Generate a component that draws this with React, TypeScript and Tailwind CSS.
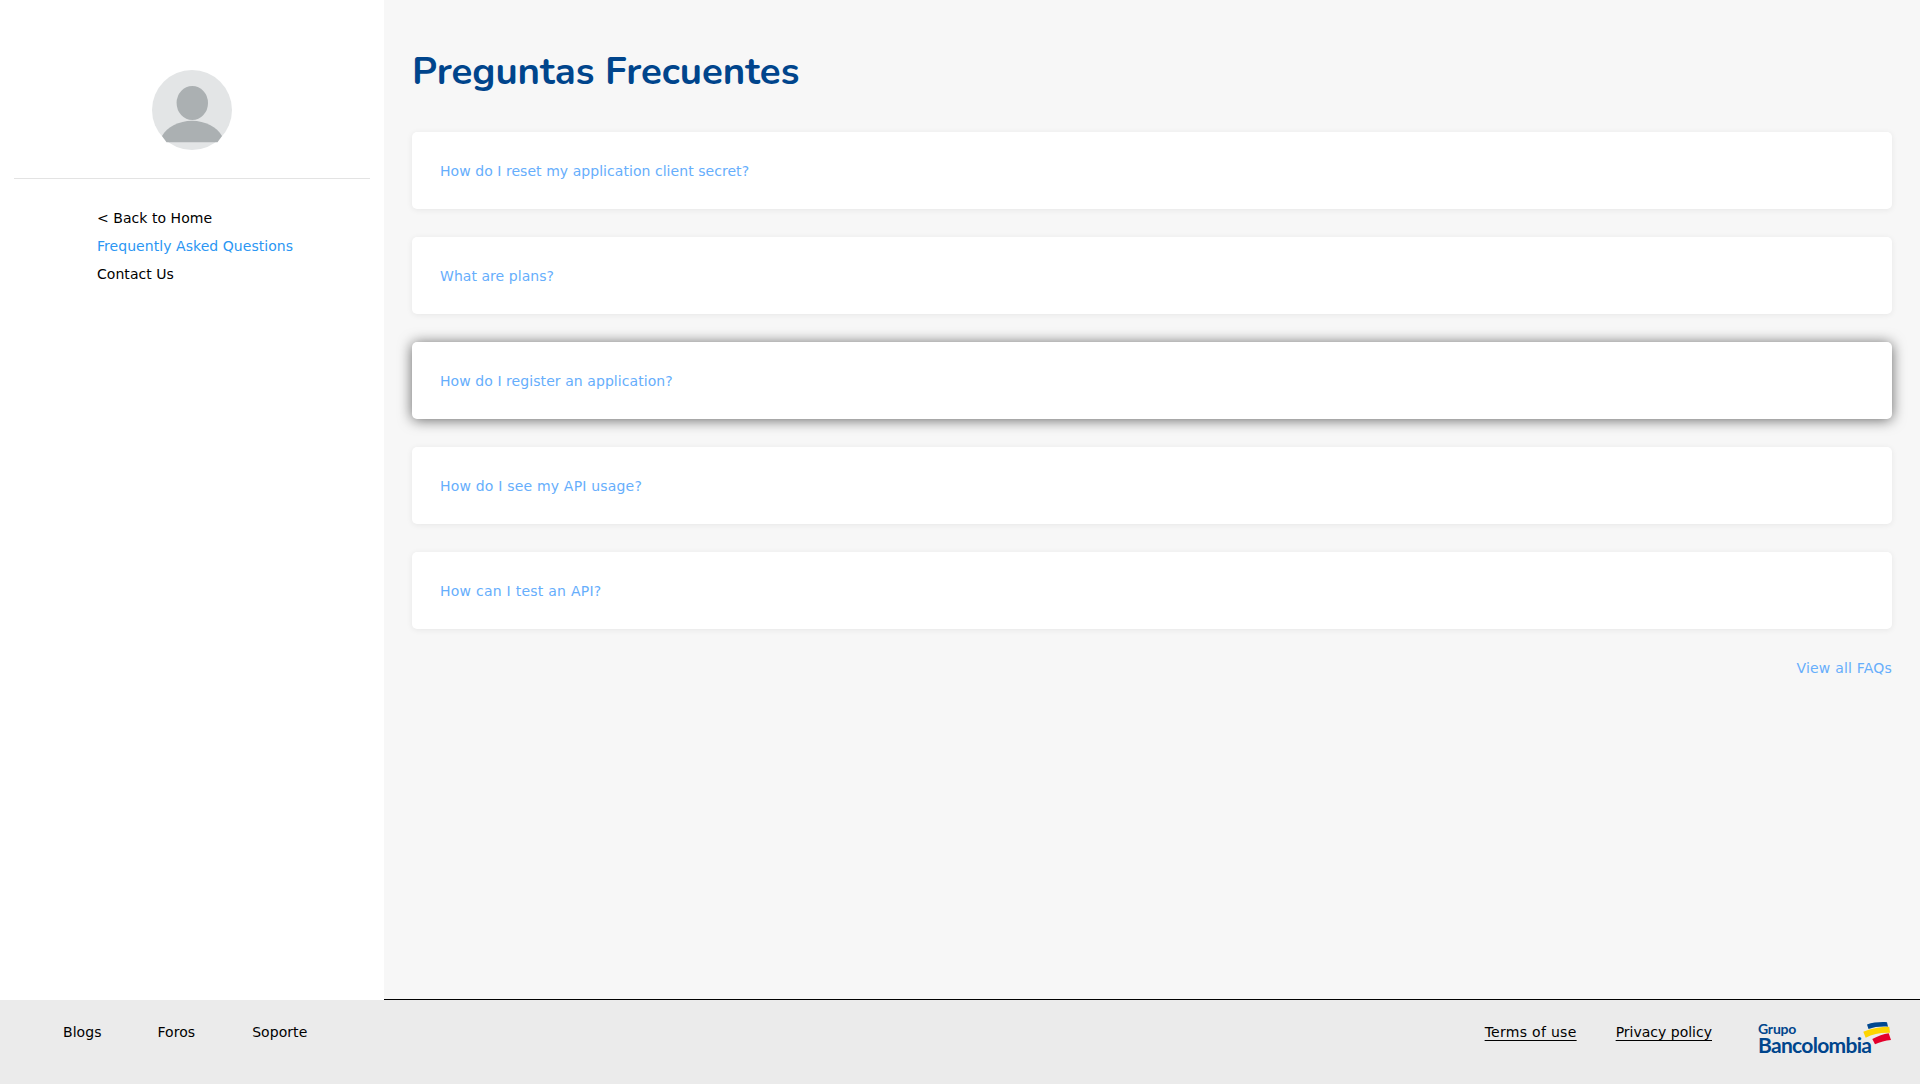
const faqs = [
  { text: "How do I reset my application client secret?", spacing: "" },
  { text: "What are plans?", spacing: "" },
  { text: "How do I register an application?", spacing: "tracking-[0.07px]" },
  { text: "How do I see my API usage?", spacing: "tracking-[0.19px]" },
  { text: "How can I test an API?", spacing: "tracking-[0.25px]" },
]

const Avatar = () => (
  <svg width="80" height="80" viewBox="0 0 80 80">
    <circle cx="40" cy="40" r="40" fill="#e3e5e6" />
    <ellipse cx="40.3" cy="33" rx="15.7" ry="17" fill="#abb0b2" />
    <path d="M14.500 72.300L10 66C15 57 27 50.700 40 50.700C53 50.700 65 57 70 66L65.500 72.300Z" fill="#abb0b2" />
  </svg>
)

const Flag = () => (
  <svg width="30" height="23" viewBox="0 0 30 23" className="absolute right-0 top-[2px]">
    <path d="M5 2.500C11 0.500 19 -0.300 25 0.300L26 4.700C19 4.200 12 5 6.500 7Z" fill="#00488f" />
    <path d="M1.300 9.700C9 6.300 19 4.700 27.300 4.700L28 10.700C19 10.300 10.500 12 3.700 15.700Z" fill="#fdd500" />
    <path d="M10.300 17C16 14 21.500 12 26.700 11.300L29 18C23.500 18.500 18 20 13 22.300Z" fill="#e4002b" />
  </svg>
)

export default function App() {
  return (
    <div className="flex h-[1084px] w-[1920px] flex-col overflow-hidden font-['DejaVu_Sans',sans-serif] text-[14px] tracking-[0.05px]">
      <div className="flex h-[1000px]">
        <aside className="w-[384px] bg-white px-[14px] pt-[70px]">
          <div className="flex justify-center">
            <Avatar />
          </div>
          <div className="mt-[28px] border-t border-[#e3e3e3]" />
          <nav className="mt-[25px] flex flex-col pl-[83px] leading-[28px]">
            <a className="text-black">&lt; Back to Home</a>
            <a className="text-[#2b96f3]">Frequently Asked Questions</a>
            <a className="text-black">Contact Us</a>
          </nav>
        </aside>
        <main className="flex-1 border-b border-black bg-[#f7f7f7] pl-[28px] pr-[28px] pt-[48px]">
          <h1 className="font-['Nunito','Noto_Sans',sans-serif] text-[38.4px] font-bold leading-[48px] tracking-normal text-[#00458c]">
            Preguntas Frecuentes
          </h1>
          <div className="mt-[36px] flex flex-col gap-[28px]">
            {faqs.map((faq, i) => (
              <div
                key={faq.text}
                className={`flex h-[77px] items-center rounded-[5px] bg-white px-[28px] pt-[2px] text-[#66aefc] ${faq.spacing} ${
                  i === 2
                    ? "shadow-[0_1px_14px_rgba(0,0,0,0.6)]"
                    : "shadow-[0_1px_6px_rgba(0,0,0,0.07)]"
                }`}>
                {faq.text}
              </div>
            ))}
          </div>
          <div className="mt-[29px] text-right leading-[20px] tracking-[0.2px] text-[#66aefc]">View all FAQs</div>
        </main>
      </div>
      <footer className="flex h-[84px] items-start bg-[#ebebeb] pt-[22px] text-black">
        <div className="flex gap-[56px] pl-[63px] leading-[20px]">
          <a>Blogs</a>
          <a>Foros</a>
          <a className="ml-px">Soporte</a>
        </div>
        <div className="ml-auto flex items-start pr-[28px]">
          <div className="flex gap-[39px] leading-[20px]">
            <a className="tracking-[0.3px] underline underline-offset-[3px]">Terms of use</a>
            <a className="tracking-normal underline underline-offset-[3px]">Privacy policy</a>
          </div>
          <div className="relative -mt-[2px] ml-[46px] h-[40px] w-[134px] font-['Lato',sans-serif] text-[#00458c]">
            <div className="mt-[2px] text-[14px] font-bold leading-[14px] tracking-[-0.2px]">Grupo</div>
            <div className="text-[21px] font-bold leading-[18px] tracking-[-0.7px]">Bancolombia</div>
            <Flag />
          </div>
        </div>
      </footer>
    </div>
  )
}
